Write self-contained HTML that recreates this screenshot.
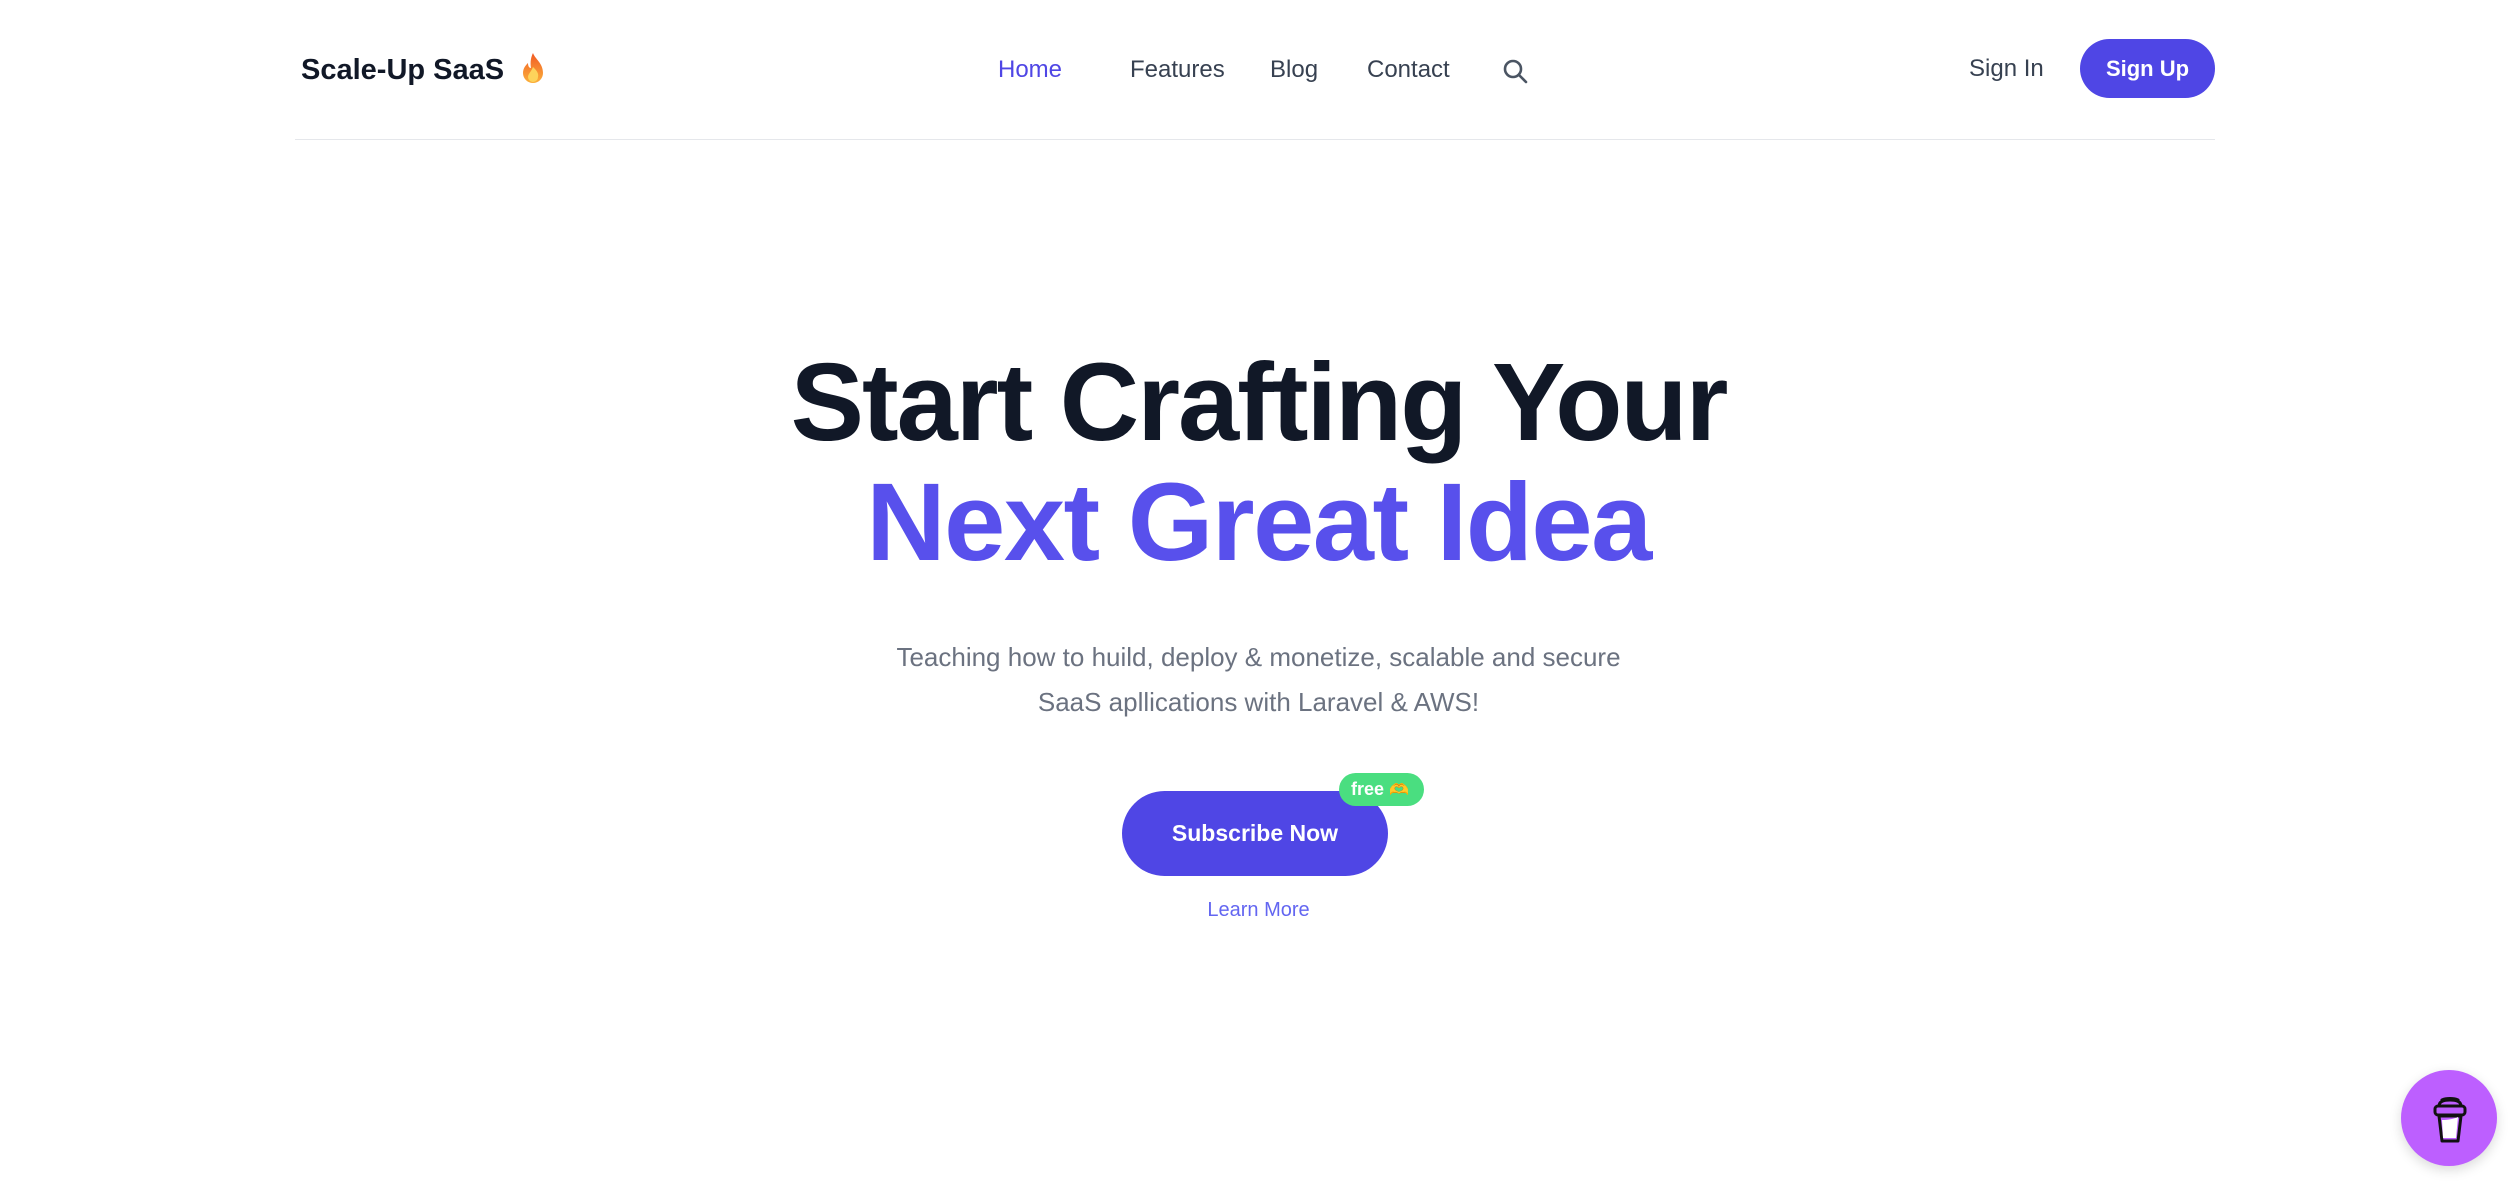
<!DOCTYPE html>
<html><head><meta charset="utf-8"><style>
*{margin:0;padding:0;box-sizing:border-box}
body{width:2517px;height:1188px;background:#fff;font-family:"Liberation Sans",sans-serif;position:relative;overflow:hidden}
.a{position:absolute;white-space:nowrap}
.nav{font-size:24px;color:#374151;top:56px}
h1{position:absolute;left:0;width:2517px;text-align:center;font-weight:900;font-size:110px;line-height:120px}
</style></head><body>
<div class="a" style="left:301px;top:54px;font-size:29px;font-weight:bold;color:#111827">Scale-Up SaaS</div>
<svg class="a" style="left:521px;top:52px" width="24" height="32" viewBox="0 0 24 32"><defs><linearGradient id="f" x1="0" y1="0" x2="0" y2="1"><stop offset="0" stop-color="#f15a24"/><stop offset="1" stop-color="#fbb03b"/></linearGradient></defs><path d="M12 1C14 7 22 11 22 21a10 10 0 0 1-20 0c0-5 3-8 5-10 0 3 1 5 3 5C9 10 10 5 12 1z" fill="url(#f)"/><path d="M12 15c3 3 6 6 5 10a5 5 0 0 1-10 0c0-3 3-5 5-10z" fill="#fdd35b"/></svg>
<div class="a nav" style="left:998px;color:#4f46e5">Home</div>
<div class="a nav" style="left:1130px">Features</div>
<div class="a nav" style="left:1270px">Blog</div>
<div class="a nav" style="left:1367px">Contact</div>
<svg class="a" style="left:1501px;top:57px" width="28" height="28" viewBox="0 0 28 28" fill="none" stroke="#4b5563" stroke-width="2.6" stroke-linecap="round"><circle cx="12" cy="12" r="8"/><path d="M18 18l7 7"/></svg>
<div class="a nav" style="left:1969px;top:55px;font-size:24px">Sign In</div>
<div class="a" style="left:2080px;top:39px;width:135px;height:59px;border-radius:30px;background:#4f46e5;color:#fff;font-size:22px;font-weight:bold;text-align:center;line-height:59px">Sign Up</div>
<div class="a" style="left:295px;top:139px;width:1920px;height:1px;background:#e5e7eb"></div>
<h1 style="top:343px;color:#111827;letter-spacing:-2px">Start Crafting Your</h1>
<h1 style="top:463px;color:#5850ec;letter-spacing:-1.5px">Next Great Idea</h1>
<div class="a" style="left:0;width:2517px;top:635px;text-align:center;font-size:26px;line-height:45px;color:#6b7280;white-space:normal">Teaching how to huild, deploy &amp; monetize, scalable and secure<br>SaaS apllications with Laravel &amp; AWS!</div>
<div class="a" style="left:1122px;top:791px;width:266px;height:85px;border-radius:43px;background:#4f46e5;color:#fff;font-size:23px;font-weight:bold;text-align:center;line-height:85px">Subscribe Now</div>
<div class="a" style="left:1339px;top:773px;width:85px;height:33px;border-radius:17px;background:#4ade80;color:#fff;font-size:18px;font-weight:bold;line-height:33px;padding-left:12px">free <span style="font-size:16px">🫶</span></div>
<div class="a" style="left:0;width:2517px;top:899px;text-align:center;font-size:20px;color:#6366f1">Learn More</div>
<div class="a" style="left:2401px;top:1070px;width:96px;height:96px;border-radius:50%;background:#bd5fff;box-shadow:0 4px 12px rgba(0,0,0,.15)"></div>
<svg class="a" style="left:2430px;top:1090px" width="40" height="56" viewBox="0 0 40 56" fill="none" stroke="#111" stroke-width="3" stroke-linejoin="round" stroke-linecap="round"><path d="M9 26l3 25h16l3-25z" fill="#bd5fff"/><path d="M12 30c6 0 11-1 16-3l-2 21h-13z" fill="#fff" stroke="none"/><rect x="5" y="16" width="30" height="9" rx="3" fill="#bd5fff"/><path d="M9 16c0-4 4-6 11-6s11 2 11 6"/><path d="M12 10c4-2 12-2 16 0"/></svg>
</body></html>
